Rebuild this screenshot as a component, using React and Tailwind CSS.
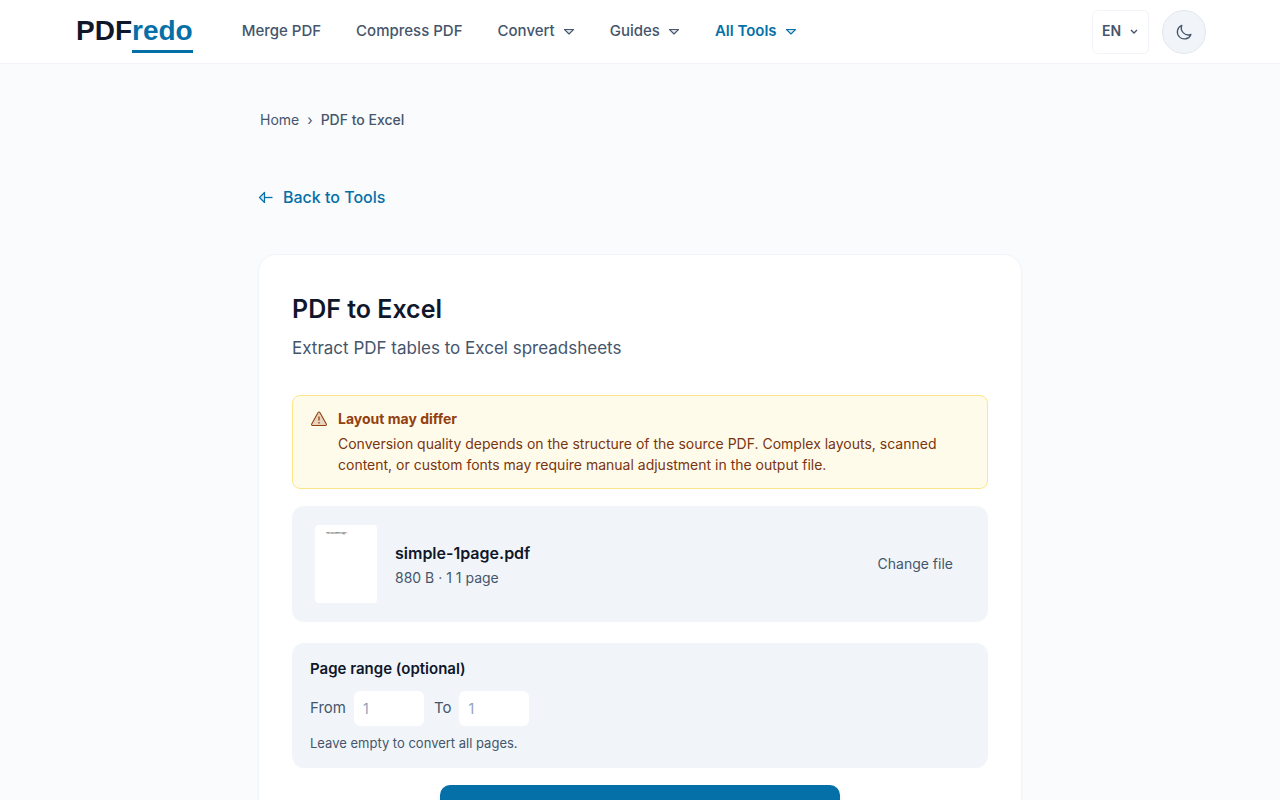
import { useState } from "react";

const navLinks = [
  { label: "Merge PDF" },
  { label: "Compress PDF" },
  { label: "Convert", menu: true },
  { label: "Guides", menu: true },
  { label: "All Tools", menu: true, active: true },
];

function MenuCaret() {
  return (
    <svg width="12" height="12" viewBox="0 0 12 12" fill="none" aria-hidden="true">
      <path
        d="M1.5 4.5h9L6 9z"
        fill="currentColor"
        fillOpacity="0.15"
        stroke="currentColor"
        strokeWidth="1.1"
        strokeLinejoin="round"
      />
    </svg>
  );
}

function Header() {
  return (
    <header className="h-16 border-b border-slate-100 bg-white">
      <div className="mx-auto flex h-full max-w-[1200px] items-center justify-between px-[34px]">
        <div className="flex items-center gap-[49px]">
          <a
            href="#"
            className="flex pl-[2px] font-['Liberation_Sans',sans-serif] text-[28px] leading-8 font-bold text-slate-900"
          >
            <span className="pt-1">PDF</span>
            <span className="border-b-3 border-[#0570a8] pt-1 pb-[3px] text-[#0570a8]">redo</span>
          </a>
          <nav className="flex items-center gap-[35px] pb-0.5">
            {navLinks.map((link) => (
              <a
                key={link.label}
                href="#"
                className={
                  link.active
                    ? "flex items-center gap-2 text-[15px] leading-6 font-semibold text-[#0570a8]"
                    : "flex items-center gap-2 text-[15px] leading-6 font-medium text-slate-600"
                }
              >
                {link.label}
                {link.menu && <MenuCaret />}
              </a>
            ))}
          </nav>
        </div>
        <div className="flex items-center gap-[13px]">
          <button
            type="button"
            className="flex h-11 w-[57px] items-center justify-between rounded-md border border-slate-100 px-[9px] pb-px text-sm font-semibold text-slate-600"
          >
            EN
            <svg width="10" height="10" viewBox="0 0 10 10" fill="none" aria-hidden="true">
              <path d="M2 4 5 7 8 4" stroke="currentColor" strokeWidth="1.4" />
            </svg>
          </button>
          <button
            type="button"
            aria-label="Toggle dark mode"
            className="flex size-11 items-center justify-center rounded-full border border-slate-200 bg-slate-100 text-slate-600"
          >
            <svg width="18" height="18" viewBox="0 0 18 18" fill="none" aria-hidden="true">
              <path
                d="M6.8 2.4A7 7 0 1 0 15.9 11.4 7 7 0 0 1 6.8 2.4z"
                stroke="currentColor"
                strokeWidth="1.3"
                strokeLinejoin="round"
              />
            </svg>
          </button>
        </div>
      </div>
    </header>
  );
}

function LayoutWarning() {
  return (
    <div className="flex gap-[10px] rounded-lg border border-[#fde68a] bg-[#fffbeb] px-[17px] pt-3 pb-[13px]">
      <svg
        className="mt-0.5 shrink-0"
        width="18"
        height="18"
        viewBox="0 0 18 18"
        fill="none"
        aria-hidden="true"
      >
        <path
          d="M8.1 2.6a1 1 0 0 1 1.8 0L16.3 14a1 1 0 0 1-.9 1.5H2.6A1 1 0 0 1 1.7 14z"
          fill="#92400e"
          fillOpacity="0.2"
          stroke="#92400e"
          strokeWidth="1.1"
          strokeLinejoin="round"
        />
        <path d="M9 6.5v4M9 12v1.5" stroke="#92400e" strokeWidth="1.3" />
      </svg>
      <div className="text-sm leading-[21px] text-[#78350f]">
        <p className="mb-1 font-bold text-[#92400e]">Layout may differ</p>
        <p>
          Conversion quality depends on the structure of the source PDF. Complex layouts, scanned
          content, or custom fonts may require manual adjustment in the output file.
        </p>
      </div>
    </div>
  );
}

function FileRow() {
  return (
    <div className="mt-[17px] flex items-center rounded-xl bg-slate-100 px-[23px] py-[19px]">
      <div className="h-[78px] w-[62px] rounded-sm bg-white pt-[7px] pl-[11px] text-[2px] leading-[3px] text-slate-900">
        Test Document Page 1
      </div>
      <div className="ml-[18px]">
        <p className="text-base leading-6 font-semibold text-slate-900">simple-1page.pdf</p>
        <p className="mt-0.5 text-sm leading-[21px] text-slate-600">880 B · 1 1 page</p>
      </div>
      <button type="button" className="ml-auto px-3 py-2 text-sm text-slate-600">
        Change file
      </button>
    </div>
  );
}

function PageRange() {
  const [from, setFrom] = useState("");
  const [to, setTo] = useState("");

  return (
    <fieldset className="mt-[21px] rounded-xl bg-slate-100 px-[18px] pt-[14px] pb-[15px]">
      <legend className="float-left w-full text-[15px] leading-6 font-semibold text-slate-900">
        Page range (optional)
      </legend>
      <div className="clear-both flex items-center gap-2 pt-[10px] text-[15px] text-slate-600">
        <label htmlFor="page-from">From</label>
        <input
          id="page-from"
          type="text"
          inputMode="numeric"
          placeholder="1"
          value={from}
          onChange={(e) => setFrom(e.target.value)}
          className="h-[35px] w-[70px] rounded-md bg-white px-[9px] text-sm placeholder:text-slate-400"
        />
        <label htmlFor="page-to" className="ml-0.5">
          To
        </label>
        <input
          id="page-to"
          type="text"
          inputMode="numeric"
          placeholder="1"
          value={to}
          onChange={(e) => setTo(e.target.value)}
          className="h-[35px] w-[70px] rounded-md bg-white px-[9px] text-sm placeholder:text-slate-400"
        />
      </div>
      <p className="mt-[7px] text-[13px] leading-5 text-slate-600">
        Leave empty to convert all pages.
      </p>
    </fieldset>
  );
}

export default function App() {
  return (
    <div className="h-screen overflow-hidden bg-[#f9fbfd] font-[Inter,sans-serif]">
      <Header />
      <main className="mx-auto max-w-[764px]">
        <nav
          aria-label="Breadcrumb"
          className="flex items-center gap-2 px-0.5 pt-[45px] text-sm leading-[21px] text-slate-600"
        >
          <a href="#">Home</a>
          <span>›</span>
          <span className="font-medium">PDF to Excel</span>
        </nav>
        <a
          href="#"
          className="mt-[55px] inline-flex items-center gap-[9px] text-base leading-6 font-medium text-[#0570a8]"
        >
          <svg width="16" height="16" viewBox="0 0 16 16" fill="none" aria-hidden="true">
            <path
              d="M6.5 3.5v10L1.5 8.5z"
              fill="currentColor"
              fillOpacity="0.15"
              stroke="currentColor"
              strokeWidth="1.2"
              strokeLinejoin="round"
            />
            <path d="M6.5 8.5h8" stroke="currentColor" strokeWidth="1.3" />
          </svg>
          Back to Tools
        </a>
        <section className="mt-[43px] rounded-[18px] border border-slate-100 bg-white px-[33px] pt-9 pb-9 shadow-xs">
          <h1 className="text-[25px] leading-9 font-semibold text-slate-900">PDF to Excel</h1>
          <p className="mt-[7px] mb-[33px] text-[17px] leading-7 text-slate-600">
            Extract PDF tables to Excel spreadsheets
          </p>
          <LayoutWarning />
          <FileRow />
          <PageRange />
          <button
            type="button"
            className="mx-auto mt-[17px] block h-14 w-full max-w-[400px] rounded-[10px] bg-[#0570a8] shadow-md"
            aria-label="Convert to Excel"
          />
        </section>
      </main>
    </div>
  );
}
